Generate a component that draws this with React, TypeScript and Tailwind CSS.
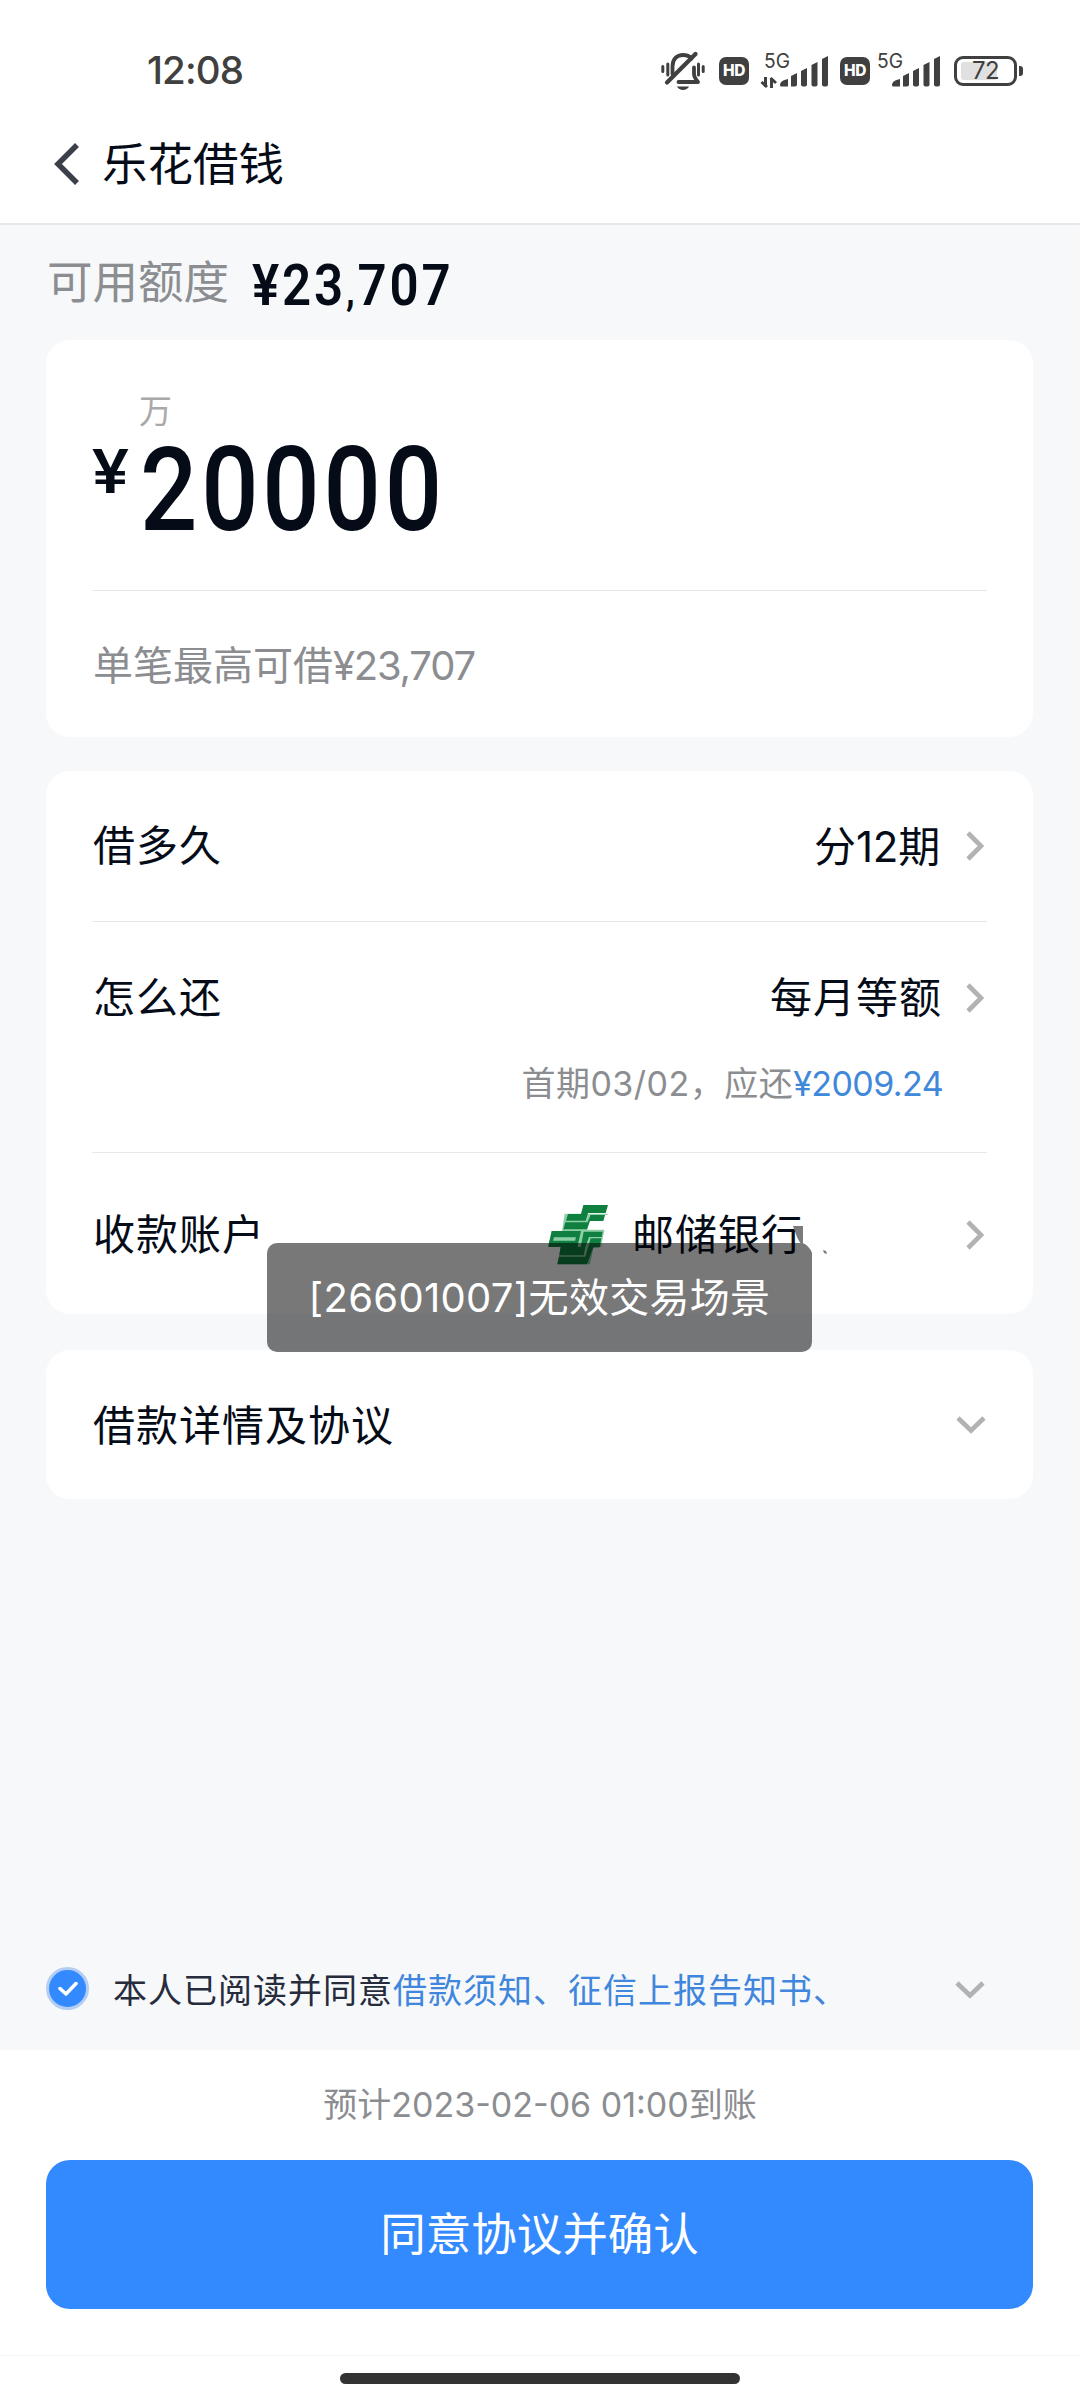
import React from "react";

interface SignalProps {
  withArrows?: boolean;
}

interface ChevronProps {
  customClass?: string;
}

interface LoanRowProps {
  label: string;
  customClass: string;
  children: React.ReactNode;
}

const BellOffIcon: React.FC = () => (
  <svg width="44" height="40" viewBox="0 0 44 40" fill="none">
    <g stroke="#404040" strokeWidth="3.8" strokeLinecap="round">
      <path d="M11.5 23V15.5C11.5 8 16 4 22 4c4 0 6.500 1.200 8.500 3.500" />
      <path d="M17.500 31H37c-2.500-3-4-5-4-8v-6.500" strokeLinejoin="round" />
      <path d="M6 31.500 34.500 3" strokeWidth="4.200" />
      <path d="M1.800 15.500v5M6.800 13v11M37.500 13v11M42.200 15.500v5" strokeWidth="3" />
    </g>
    <path d="M16 35.500h12c-1 2.300-3.500 3.500-6 3.500s-5-1.200-6-3.500z" fill="#404040" />
  </svg>
);

const HdBadge: React.FC = () => (
  <div className="flex h-[28px] w-[30px] items-center justify-center rounded-[7px] bg-[#404040] text-[15.5px] font-extrabold leading-none tracking-[-0.5px] text-white">
    HD
  </div>
);

const Signal: React.FC<SignalProps> = ({ withArrows }) => {
  const offset = withArrows ? 19 : 15;

  return (
    <svg
      width={offset + 48}
      height="38"
      viewBox={`0 0 ${offset + 48} 38`}
      className="overflow-visible"
    >
      <text
        x={withArrows ? 3 : 0}
        y="16"
        fontSize="20"
        textLength="26"
        lengthAdjust="spacingAndGlyphs"
        fill="#404040"
      >
        5G
      </text>
      {withArrows ? (
        <path
          d="M4.500 25v10M6 35l-5.500-5M10.500 36V26M9.500 26l5.500 5"
          stroke="#404040"
          strokeWidth="3"
          fill="none"
        />
      ) : null}
      <g transform={`translate(${offset} -1)`} fill="#404040">
        <path d="M0 34c0-3 3-5 8-6v7.500H1.500C.5 35.500 0 35 0 34z" />
        <path d="M11 25l6-3v11.500a2 2 0 0 1-2 2h-4z" />
        <path d="M21 20l6-3v16.500a2 2 0 0 1-2 2h-2a2 2 0 0 1-2-2z" />
        <path d="M31.500 14l6-3v22.500a2 2 0 0 1-2 2h-2a2 2 0 0 1-2-2z" />
        <path d="M42 8l6-3v28.500a2 2 0 0 1-2 2h-2a2 2 0 0 1-2-2z" />
      </g>
    </svg>
  );
};

const Battery: React.FC = () => (
  <div className="flex items-center gap-[2px]">
    <div className="relative flex h-[30px] w-[63px] items-center justify-center rounded-[9px] border-[3px] border-[#404040] text-[24px] leading-none tracking-[-0.5px]">
      <div className="absolute left-[4px] top-[3px] h-[18px] w-[36px] rounded-[3px] bg-[#e0e0e0]" />
      <span className="relative">72</span>
    </div>
    <div className="h-[10px] w-[4px] rounded-r-[3px] bg-[#404040]" />
  </div>
);

const ChevronRight: React.FC = () => (
  <svg width="18" height="30" viewBox="0 0 18 30" fill="none">
    <path d="M2 2l13 13L2 28" stroke="#b2b2b2" strokeWidth="4.600" />
  </svg>
);

const ChevronDown: React.FC<ChevronProps> = ({ customClass }) => (
  <svg width="30" height="18" viewBox="0 0 30 18" fill="none" className={customClass}>
    <path d="M2 2l13 12.500L28 2" stroke="#b2b2b2" strokeWidth="4.600" />
  </svg>
);

const BankLogo: React.FC = () => (
  <svg width="80" height="80" viewBox="0 0 240 240">
    <path d="M74 56H203L183 156L160 158L150 208H52L62 156H25L35 108H66z" fill="#8fcfa8" />
    <path d="M203 60L196 104H142L150 60zM70 56H20V106H66z" fill="#fff" />
    <g fill="#0f8040">
      <path d="M130 30H204L197 54H144L137 77H78L84 57H123z" />
      <path d="M76 82H143L151 60H195L190 78H150L141 103H70z" />
      <path d="M35 108H123L119 127H31z" />
      <path d="M31 126H42L39 139H28zM108 126H119L116 139H105z" />
      <path d="M28 137H116L113 156H25z" />
      <path d="M131 110H188L185 126H147L136 157L131 181H58L62 156H122z" />
      <path d="M152 130H184L179 157H160L141 208H52L57 185H136z" />
    </g>
  </svg>
);

const LoanRow: React.FC<LoanRowProps> = ({ label, customClass, children }) => (
  <div className={`flex items-center justify-between ${customClass}`}>
    <span className="ml-px tracking-[1px]">{label}</span>
    <div className="flex items-center">{children}</div>
  </div>
);

const App: React.FC = () => {
  return (
    <div className="relative flex h-[2400px] w-[1080px] flex-col overflow-hidden bg-[#f6f8fa] font-['Inter','Noto_Sans_CJK_SC',sans-serif] text-[42px] leading-none text-[#050c18]">
      <header className="h-[225px] border-b-2 border-[#e6e8eb] bg-white">
        <div className="flex h-[114px] items-center justify-between pl-[147px] pr-[57px] pt-[27px] text-[#404040]">
          <span className="text-[38.5px] font-medium tracking-[-0.9px]">12:08</span>
          <div className="flex items-center">
            <BellOffIcon />
            <div className="ml-[14px] mr-3">
              <HdBadge />
            </div>
            <Signal withArrows />
            <div className="ml-3 mr-[7px]">
              <HdBadge />
            </div>
            <Signal />
            <div className="ml-[14px]">
              <Battery />
            </div>
          </div>
        </div>
        <div className="flex h-[100px] items-center pl-[54px]">
          <svg width="26" height="42" viewBox="0 0 26 42" fill="none">
            <path d="M23 2L4 21l19 19" stroke="#3b3f4a" strokeWidth="5.500" />
          </svg>
          <h1 className="ml-[22px] pt-px text-[45.5px]">乐花借钱</h1>
        </div>
      </header>

      <main className="px-[46px]">
        <div className="flex h-[115px] items-center">
          <span className="ml-px mt-px text-[45.5px] text-[#8b8d91]">可用额度</span>
          <span className="ml-[23px] mt-[4px] origin-left scale-x-[0.88] font-['Roboto'] text-[58px] font-semibold tracking-[3.2px]">
            ¥23<span className="text-[42px]">,</span>707
          </span>
        </div>

        <section className="h-[397px] w-[987px] rounded-[24px] bg-white px-[46px]">
          <div className="h-[251px] border-b border-[#e8e8e8] pt-[55px]">
            <div className="pl-[47px] text-[33px] text-[#a9a9a9]">万</div>
            <div className="flex font-['Roboto'] font-medium">
              <span className="mt-[13px] w-[48px] origin-left scale-x-[1.12] text-[62px]">¥</span>
              <span className="mt-[4px] origin-left scale-x-[0.87] text-[116px] tracking-[4.400px]">
                20000
              </span>
            </div>
          </div>
          <div className="flex h-[150px] items-center text-[40px] text-[#8b8d91]">
            <span className="ml-px">单笔最高可借</span>
            <span className="tracking-[-1.2px]">¥23,707</span>
          </div>
        </section>

        <section className="mt-[34px] h-[543px] w-[987px] rounded-[24px] bg-white px-[46px]">
          <LoanRow label="借多久" customClass="h-[151px] border-b border-[#e8e8e8]">
            <span className="mr-[26px] pt-px tracking-[-0.2px]">分12期</span>
            <div className="mr-[3px]">
              <ChevronRight />
            </div>
          </LoanRow>
          <div className="h-[231px] border-b border-[#e8e8e8]">
            <LoanRow label="怎么还" customClass="h-[152px]">
              <span className="mr-[24px] tracking-[1px]">每月等额</span>
              <div className="mr-[3px]">
                <ChevronRight />
              </div>
            </LoanRow>
            <div className="-mt-[7px] flex justify-end pr-[44px] text-[34px] text-[#8b8d91]">
              <span className="tracking-[0.5px]">首期03/02，应还</span>
              <span className="tracking-[-0.6px] text-[#3f88da]">¥2009.24</span>
            </div>
          </div>
          <LoanRow label="收款账户" customClass="h-[163px]">
            <BankLogo />
            <span className="ml-[12px] mr-[162px] tracking-[1px]">邮储银行</span>
            <div className="mr-[3px]">
              <ChevronRight />
            </div>
          </LoanRow>
        </section>

        <section className="mt-9 flex h-[149px] w-[987px] items-center justify-between rounded-[24px] bg-white pl-[47px] pr-[47px]">
          <span className="pt-[2px] tracking-[1px]">借款详情及协议</span>
          <ChevronDown />
        </section>
      </main>

      <div className="mt-auto flex h-[123px] items-center px-[46px] text-[34px]">
        <span className="flex size-[43px] items-center justify-center rounded-full border-[3px] border-[#b3cdf3] bg-[#338aff]">
          <svg width="20" height="16" viewBox="0 0 20 16" fill="none">
            <path
              d="M2 7.500l6 5.500L18 2.500"
              stroke="#ffffff"
              strokeWidth="3.500"
              strokeLinecap="round"
              strokeLinejoin="round"
            />
          </svg>
        </span>
        <span className="ml-[24px] pt-[5px] tracking-[1px] text-[#262c3c]">
          本人已阅读并同意
          <span className="text-[#3f86dc]">借款须知、征信上报告知书、</span>
        </span>
        <ChevronDown customClass="ml-auto mr-[49px] mt-[2px]" />
      </div>

      <footer className="flex h-[350px] flex-col bg-white px-[46px]">
        <div className="flex h-[110px] items-center justify-center text-[34px] text-[#8b8d91]">
          预计2023-02-06 01:00到账
        </div>
        <button className="h-[149px] w-[987px] rounded-[24px] bg-[#338aff] text-[45.5px] text-white">
          同意协议并确认
        </button>
        <div className="-mx-[46px] mt-[46px] flex justify-center border-t border-[#f6f6f6] pt-[17px]">
          <div className="h-[11px] w-[400px] rounded-full bg-[#333333]" />
        </div>
      </footer>

      {/* toast lies over the account row and the gap below it */}
      <div className="absolute left-[267px] top-[1243px] flex h-[109px] w-[545px] items-center justify-center rounded-[10px] bg-black/53 text-[40px] tracking-[0.3px] text-white">
        [26601007]无效交易场景
      </div>
      <svg
        className="absolute left-[790px] top-[1220px]"
        width="44"
        height="40"
        viewBox="0 0 44 40"
      >
        <path d="M13 20h10v14c-3-6-6-9-10-11z" fill="#ffffff" />
        <path d="M3 6h10v19C8 22 6 14 3 6z" fill="#7b7b7b" />
        <path d="M33 30l3 1 1 3-3-1z" fill="#777777" />
      </svg>
    </div>
  );
};

export default App;
